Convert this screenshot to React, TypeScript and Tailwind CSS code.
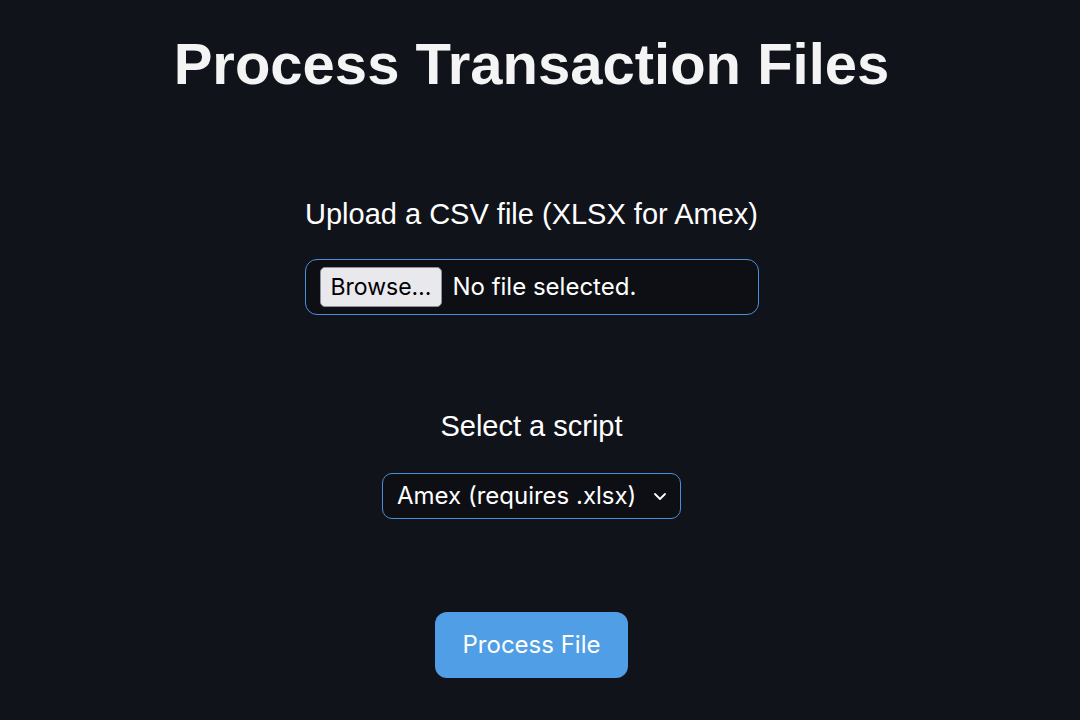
export default function App() {
  return (
    <div className="min-h-[720px] w-full bg-[#11131a] text-[#f3f3f3]">
      <div className="flex w-[1063px] flex-col items-center">
        <h1 className="mt-[24px] font-['Liberation_Sans',Arial,sans-serif] text-[58px] font-bold leading-[80px] text-[#f4f4f4]">
          Process Transaction Files
        </h1>

        <label className="mt-[92px] font-['Liberation_Sans',Arial,sans-serif] text-[29px] leading-[36px] text-white">
          Upload a CSV file (XLSX for Amex)
        </label>
        <div className="mt-[27px] flex h-[56px] w-[454px] items-center gap-[10px] rounded-[12px] border border-[#4a90d9] bg-[#0d0f14] px-[14px] font-['Inter',sans-serif]">
          <div className="flex h-[40px] items-center rounded-[5px] border border-[#8f8f9d] bg-[#e9e9ed] px-[10px] text-[23px] text-black">
            Browse…
          </div>
          <span className="text-[24px] text-white">No file selected.</span>
        </div>

        <label className="mt-[93px] font-['Liberation_Sans',Arial,sans-serif] text-[29px] leading-[36px] text-white">
          Select a script
        </label>
        <div className="mt-[29px] flex h-[46px] w-[299px] items-center justify-between rounded-[10px] border border-[#4a90d9] bg-[#0d0f14] pl-[14px] pr-[12px] font-['Inter',sans-serif]">
          <span className="text-[24px] text-white">Amex (requires .xlsx)</span>
          <svg width="16" height="16" viewBox="0 0 16 16" fill="none">
            <path d="M3 6l5 5 5-5" stroke="white" strokeWidth="1.8" strokeLinecap="round" strokeLinejoin="round" />
          </svg>
        </div>

        <button className="mt-[93px] flex h-[66px] w-[193px] items-center justify-center rounded-[12px] bg-[#4f9ee6] font-['Inter',sans-serif] text-[24px] text-white">
          Process File
        </button>
      </div>
    </div>
  );
}
